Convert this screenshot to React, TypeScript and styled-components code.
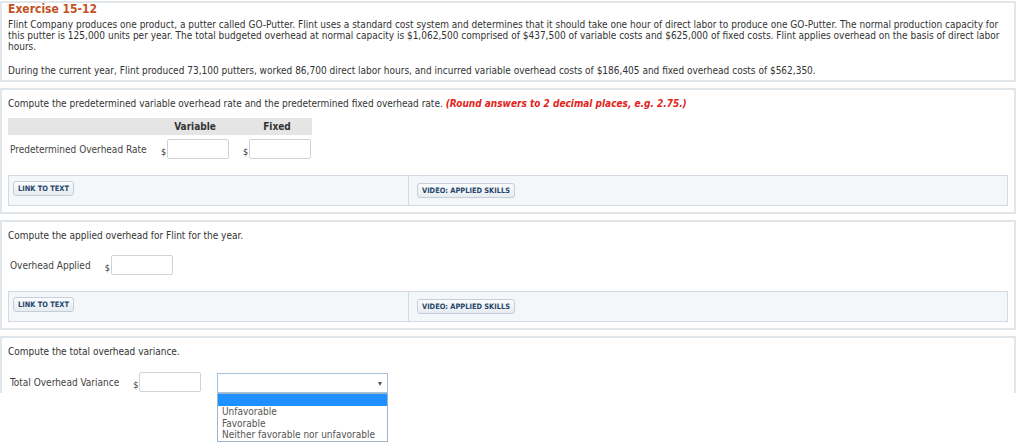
import React from "react";
import styled, { createGlobalStyle } from "styled-components";

const GlobalStyle = createGlobalStyle`
  html, body {
    margin: 0;
    padding: 0;
    background: #ffffff;
  }
  body {
    font-family: "DejaVu Sans Condensed", "DejaVu Sans", Verdana, sans-serif;
    font-size: 10px;
    line-height: 11px;
    color: #333333;
  }
`;

const Page = styled.div`
  position: relative;
  width: 1024px;
  height: 448px;
  overflow: hidden;
`;

const Viewport = styled.div`
  height: 393px;
  overflow: hidden;
  padding-top: 1px;
  box-sizing: border-box;
  display: flex;
  flex-direction: column;
  gap: 6px;
`;

const Panel = styled.section<{ $intro?: boolean }>`
  flex-shrink: 0;
  width: 1016px;
  box-sizing: border-box;
  border: 2px solid #e1e6eb;
  padding: ${(p) => (p.$intro ? "0 6px 4px" : "8px 6px 6px")};
`;

const Title = styled.h1`
  margin: 0;
  font-size: 12px;
  line-height: 13px;
  font-weight: bold;
  color: #c4511f;
`;

const Paragraph = styled.p<{ $gap: number }>`
  margin: ${(p) => p.$gap}px 0 0;
`;

const Prompt = styled.p`
  margin: 0;
`;

const Hint = styled.span`
  color: #e2231a;
  font-weight: bold;
  font-style: italic;
`;

const Table = styled.div`
  margin-top: 9px;
  width: 304px;
  display: flex;
  flex-direction: column;
  gap: 4px;
`;

const TableRow = styled.div<{ $head?: boolean }>`
  display: grid;
  grid-template-columns: 139px 68px 68px;
  column-gap: 14px;
  height: ${(p) => (p.$head ? "17px" : "20px")};
  background: ${(p) => (p.$head ? "#e5e5e5" : "transparent")};
`;

const HeadCell = styled.div`
  font-weight: bold;
  line-height: 17px;
  text-align: center;
  color: #333333;
`;

const RowLabel = styled.div`
  align-self: center;
  padding-left: 2px;
  color: #444444;
  white-space: nowrap;
`;

const AmountField = styled.div`
  display: flex;
  align-items: flex-end;
`;

const Dollar = styled.span`
  width: 6px;
  font-size: 9px;
  line-height: 9px;
  color: #333333;
  padding-bottom: 2px;
`;

const Input = styled.input`
  box-sizing: border-box;
  width: 62px;
  height: 20px;
  margin: 0;
  padding: 0 3px;
  border: 1px solid #cdd3d9;
  border-radius: 2px;
  background: #ffffff;
  font: inherit;
`;

const FieldRow = styled.div<{ $gap: number }>`
  margin-top: ${(p) => p.$gap}px;
  display: flex;
  align-items: center;
  height: 20px;
`;

const FieldLabel = styled.div`
  padding-left: 2px;
  margin-right: 14px;
  color: #444444;
  white-space: nowrap;
`;

const SelectBox = styled.div`
  position: relative;
  box-sizing: border-box;
  margin-left: 16px;
  margin-top: 2px;
  width: 171px;
  height: 20px;
  border: 1px solid #a9c0d8;
  background: #ffffff;

  &::after {
    content: "";
    position: absolute;
    right: 5px;
    top: 8px;
    border-left: 2.5px solid transparent;
    border-right: 2.5px solid transparent;
    border-top: 4px solid #555555;
  }
`;

const LinkBar = styled.div`
  margin-top: 16px;
  display: grid;
  grid-template-columns: 399px 1fr;
  height: 31px;
  box-sizing: border-box;
  border: 1px solid #d4dae1;
  background: #f4f7fa;
`;

const LinkCell = styled.div<{ $divider?: boolean; $top: number }>`
  padding: ${(p) => p.$top}px ${(p) => (p.$divider ? "8px" : "4px")};
  border-left: ${(p) => (p.$divider ? "1px solid #d4dae1" : "none")};
  display: flex;
  align-items: flex-start;
`;

const LinkButton = styled.button`
  height: 15px;
  margin: 0;
  padding: 0 4px;
  border: 1px solid #c5ced8;
  border-radius: 3px;
  background: linear-gradient(#fafcfd, #e7ecf1);
  font-family: "DejaVu Sans Condensed", "DejaVu Sans", Verdana, sans-serif;
  font-size: 7.4px;
  font-weight: bold;
  line-height: 13px;
  text-transform: uppercase;
  color: #26466c;
  cursor: pointer;
`;

const OptionList = styled.ul`
  position: absolute;
  left: 217px;
  top: 393px;
  box-sizing: border-box;
  width: 171px;
  margin: 0;
  padding: 0;
  list-style: none;
  border: 1px solid #9fb5cc;
  background: #ffffff;
`;

const OptionItem = styled.li<{ $active?: boolean }>`
  height: ${(p) => (p.$active ? "12px" : "11.7px")};
  padding-left: 4px;
  line-height: 11.7px;
  white-space: nowrap;
  color: #555555;
  background: ${(p) => (p.$active ? "#1e90ff" : "transparent")};
`;

function Links() {
  return (
    <LinkBar>
      <LinkCell $top={5}>
        <LinkButton>Link to Text</LinkButton>
      </LinkCell>
      <LinkCell $divider $top={7}>
        <LinkButton>Video: Applied Skills</LinkButton>
      </LinkCell>
    </LinkBar>
  );
}

function Amount() {
  return (
    <AmountField>
      <Dollar>$</Dollar>
      <Input type="text" />
    </AmountField>
  );
}

export default function App() {
  return (
    <Page>
      <GlobalStyle />
      <Viewport>
        <Panel $intro>
          <Title>Exercise 15-12</Title>
          <Paragraph $gap={3}>
            Flint Company produces one product, a putter called GO-Putter. Flint uses a standard cost system and
            determines that it should take one hour of direct labor to produce one GO-Putter. The normal production
            capacity for this putter is 125,000 units per year. The total budgeted overhead at normal capacity is
            $1,062,500 comprised of $437,500 of variable costs and $625,000 of fixed costs. Flint applies overhead on
            the basis of direct labor hours.
          </Paragraph>
          <Paragraph $gap={13}>
            During the current year, Flint produced 73,100 putters, worked 86,700 direct labor hours, and incurred
            variable overhead costs of $186,405 and fixed overhead costs of $562,350.
          </Paragraph>
        </Panel>

        <Panel>
          <Prompt>
            Compute the predetermined variable overhead rate and the predetermined fixed overhead rate.{" "}
            <Hint>(Round answers to 2 decimal places, e.g. 2.75.)</Hint>
          </Prompt>
          <Table>
            <TableRow $head>
              <HeadCell />
              <HeadCell>Variable</HeadCell>
              <HeadCell>Fixed</HeadCell>
            </TableRow>
            <TableRow>
              <RowLabel>Predetermined Overhead Rate</RowLabel>
              <Amount />
              <Amount />
            </TableRow>
          </Table>
          <Links />
        </Panel>

        <Panel>
          <Prompt>Compute the applied overhead for Flint for the year.</Prompt>
          <FieldRow $gap={14}>
            <FieldLabel>Overhead Applied</FieldLabel>
            <Amount />
          </FieldRow>
          <Links />
        </Panel>

        <Panel>
          <Prompt>Compute the total overhead variance.</Prompt>
          <FieldRow $gap={15}>
            <FieldLabel>Total Overhead Variance</FieldLabel>
            <Amount />
            <SelectBox />
          </FieldRow>
        </Panel>
      </Viewport>

      <OptionList role="listbox">
        <OptionItem $active>&nbsp;</OptionItem>
        <OptionItem>Unfavorable</OptionItem>
        <OptionItem>Favorable</OptionItem>
        <OptionItem>Neither favorable nor unfavorable</OptionItem>
      </OptionList>
    </Page>
  );
}
